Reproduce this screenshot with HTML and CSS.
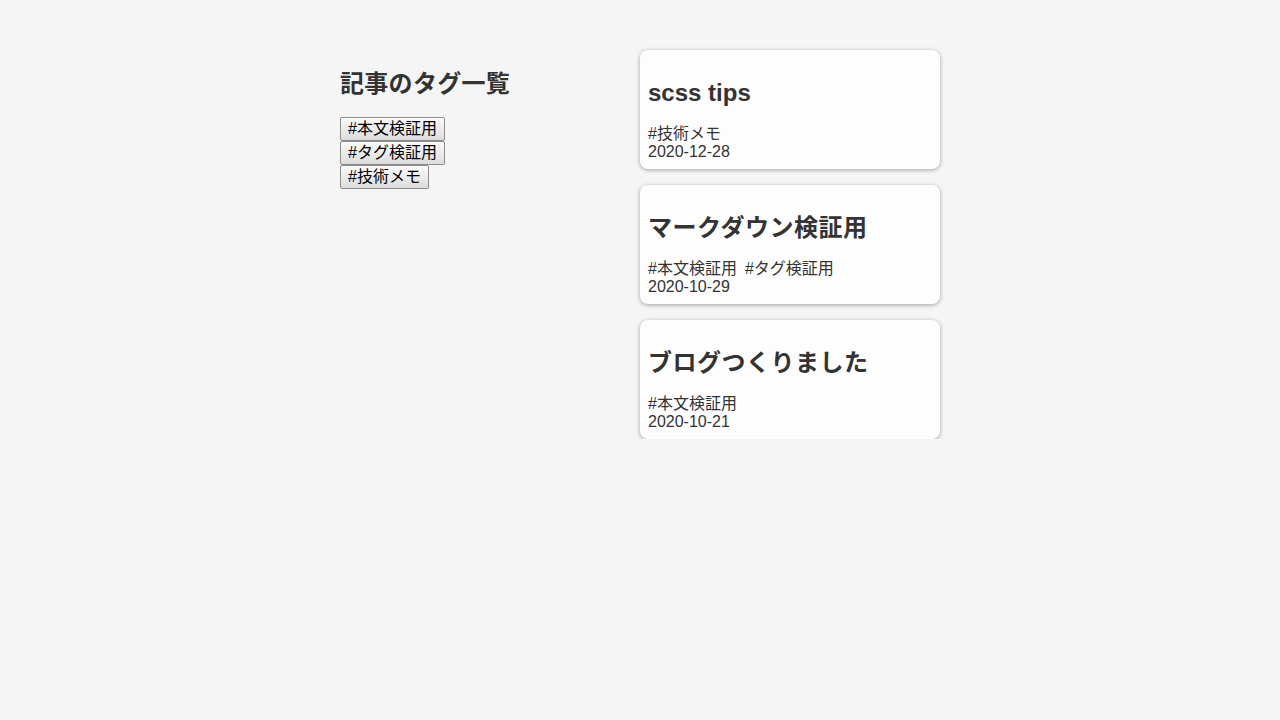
FILE: index.html
```html
<!DOCTYPE html>
<html lang="ja">
<head>
<meta charset="utf-8">
<title>blog</title>
<link rel="stylesheet" href="styles.css">
</head>
<body>
<div class="container">
  <aside class="sidebar">
    <h2 class="sidebar-title">記事のタグ一覧</h2>
    <button class="tag-btn">#本文検証用</button>
    <button class="tag-btn">#タグ検証用</button>
    <button class="tag-btn">#技術メモ</button>
  </aside>
  <main class="posts">
    <article class="card">
      <h2 class="card-title">scss tips</h2>
      <div class="card-tags"><span class="tag">#技術メモ</span></div>
      <div class="card-date">2020-12-28</div>
    </article>
    <article class="card">
      <h2 class="card-title cjk">マークダウン検証用</h2>
      <div class="card-tags"><span class="tag">#本文検証用</span><span class="tag">#タグ検証用</span></div>
      <div class="card-date">2020-10-29</div>
    </article>
    <article class="card">
      <h2 class="card-title cjk">ブログつくりました</h2>
      <div class="card-tags"><span class="tag">#本文検証用</span></div>
      <div class="card-date">2020-10-21</div>
    </article>
  </main>
</div>
</body>
</html>
```
FILE: styles.css
```css
html, body {
  margin: 0;
  padding: 0;
  background: #f5f5f5;
  color: #333;
  font-family: "Liberation Sans", "Noto Sans CJK JP", sans-serif;
  font-size: 16px;
}
.container {
  width: 600px;
  margin: 0 auto;
  padding-top: 50px;
  display: flex;
}
.sidebar {
  width: 300px;
  display: flex;
  flex-direction: column;
  align-items: flex-start;
}
.sidebar-title {
  font-size: 24px;
  font-weight: bold;
  margin: 20px 0 19px;
  line-height: 28px;
  letter-spacing: 0.3px;
}
.tag-btn {
  font-family: "Liberation Sans", "Noto Sans CJK JP", sans-serif;
  font-size: 16px;
  line-height: 18px;
  color: #000;
  padding: 2px 7px 2px 7px;
  border: 1px solid #8d8d8d;
  border-radius: 2px;
  background: linear-gradient(#fbfbfb, #dcdcdc);
  height: 24px;
}
.posts {
  width: 300px;
  display: flex;
  flex-direction: column;
  gap: 16px;
}
.card {
  background: #fdfdfd;
  border-radius: 8px;
  box-shadow: 0 1px 4px rgba(0, 0, 0, 0.35);
  padding: 8px 8px 8px;
}
.card-title {
  font-size: 24px;
  font-weight: bold;
  line-height: 28px;
  margin: 21px 0 18px;
}
.card-title.cjk {
  letter-spacing: 0.5px;
}
.card-tags {
  display: flex;
  gap: 8px;
  line-height: 18px;
}
.card-date {
  line-height: 18px;
}
```
